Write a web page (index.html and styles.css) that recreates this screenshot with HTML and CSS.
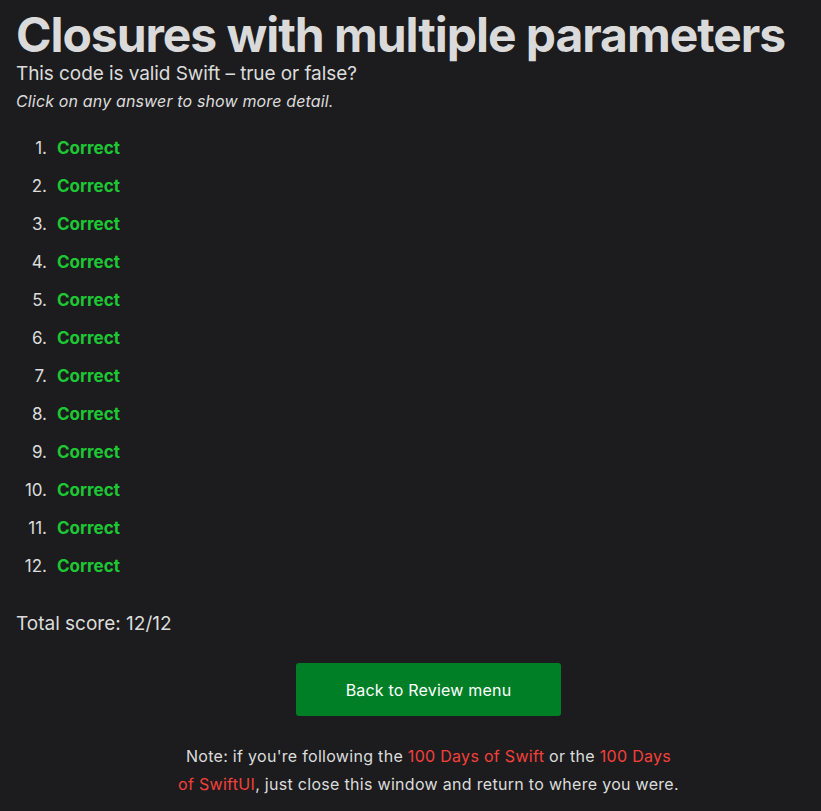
FILE: index.html
```html
<!DOCTYPE html>
<html>
<head>
<meta charset="utf-8">
<link rel="stylesheet" href="styles.css">
</head>
<body>
<main class="page">
  <h1 class="title">Closures with multiple parameters</h1>
  <p class="subtitle">This code is valid Swift – true or false?</p>
  <p class="hint">Click on any answer to show more detail.</p>
  <ol class="answers">
    <li><span class="correct">Correct</span></li>
    <li><span class="correct">Correct</span></li>
    <li><span class="correct">Correct</span></li>
    <li><span class="correct">Correct</span></li>
    <li><span class="correct">Correct</span></li>
    <li><span class="correct">Correct</span></li>
    <li><span class="correct">Correct</span></li>
    <li><span class="correct">Correct</span></li>
    <li><span class="correct">Correct</span></li>
    <li><span class="correct">Correct</span></li>
    <li><span class="correct">Correct</span></li>
    <li><span class="correct">Correct</span></li>
  </ol>
  <p class="score">Total score: 12/12</p>
  <div class="footer">
    <a class="back-btn" href="#">Back to Review menu</a>
    <p class="note">Note: if you're following the <a class="link" href="#">100 Days of Swift</a> or the <a class="link" href="#">100 Days of SwiftUI</a>, just close this window and return to where you were.</p>
  </div>
</main>
</body>
</html>
```

FILE: styles.css
```css
html, body {
  margin: 0;
  padding: 0;
  background: #1c1c1e;
}
body {
  font-family: Inter, "Noto Sans", sans-serif;
  color: #dcdcdc;
}
.page {
  padding: 0 16px;
}
.title {
  margin: 0;
  padding-top: 9px;
  font-size: 48px;
  font-weight: 700;
  line-height: 52px;
  color: #dadada;
  letter-spacing: -1.05px;
  white-space: nowrap;
}
.subtitle {
  margin: 0;
  font-size: 19px;
  line-height: 26px;
  letter-spacing: -0.08px;
}
.hint {
  margin: 0;
  font-size: 16px;
  font-style: italic;
  line-height: 28px;
  letter-spacing: 0.15px;
}
.answers {
  margin: 22px 0 0 0;
  padding: 0;
  list-style: none;
  counter-reset: item;
  font-size: 17px;
  line-height: 22px;
}
.answers li {
  display: flex;
  margin-bottom: 16px;
  counter-increment: item;
}
.answers li::before {
  content: counter(item) ".";
  width: 31px;
  margin-right: 10px;
  text-align: right;
  color: #dcdcdc;
}
.correct {
  color: #1cc834;
  font-weight: 700;
}
.score {
  margin: 34px 0 0 0;
  font-size: 19px;
  line-height: 26px;
}
.footer {
  margin-left: 36px;
  display: flex;
  flex-direction: column;
  align-items: center;
}
.back-btn {
  margin-top: 26px;
  width: 265px;
  height: 53px;
  display: flex;
  align-items: center;
  justify-content: center;
  background: #007f27;
  color: #ffffff;
  border-radius: 3px;
  text-decoration: none;
  font-size: 16px;
  letter-spacing: 0.2px;
}
.note {
  margin: 26px 0 0 0;
  max-width: 505px;
  text-align: center;
  font-size: 16px;
  line-height: 28px;
  letter-spacing: 0.3px;
}
.link {
  color: #f5403a;
  text-decoration: none;
}
```
